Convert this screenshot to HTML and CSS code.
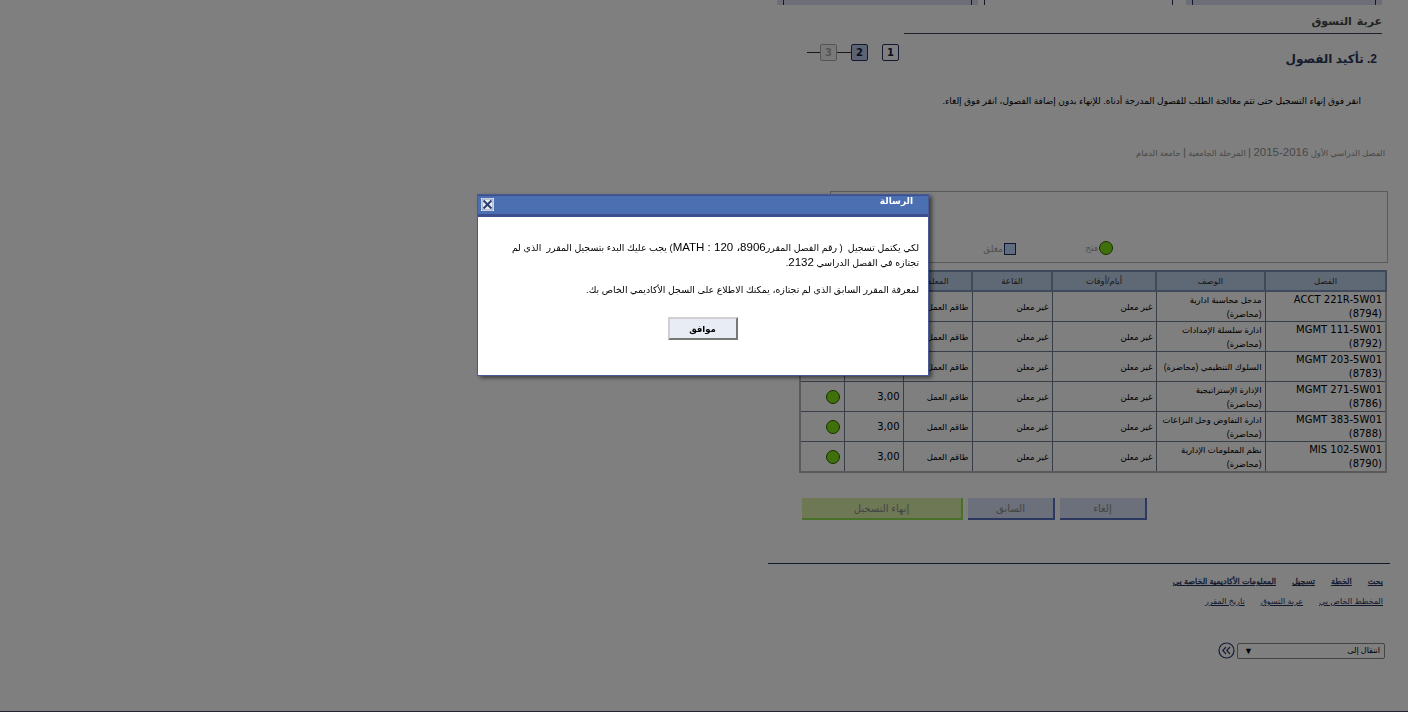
FILE: index.html
```html
<!DOCTYPE html>
<html lang="ar" dir="rtl">
<head>
    <meta charset="utf-8">
    <title>عربة التسوق</title>
    <link rel="stylesheet" href="styles.css">
</head>
<body>
    <div class="page">
        <!-- Tabs -->
        <div class="tabs">
            <div class="tab tab-c"><div class="tab-in"></div></div>
            <div class="tab tab-b"><div class="tab-in"></div></div>
            <div class="tab tab-a"><div class="tab-in"></div></div>
        </div>

        <div class="page-title">عربة التسوق</div>

        <div class="step-head">
            <h1>2. تأكيد الفصول</h1>
            <div class="steps">
                <span class="step">1</span>
                <span class="step-gap"></span>
                <span class="step step-on">2</span>
                <span class="step-line"></span>
                <span class="step step-off">3</span>
                <span class="step-line step-line-end"></span>
            </div>
        </div>

        <p class="intro">انقر فوق إنهاء التسجيل حتى تتم معالجة الطلب للفصول المدرجة أدناه. للإنهاء بدون إضافة الفصول، انقر فوق إلغاء.</p>
        <p class="term">الفصل الدراسي الأول <span class="latin">2016-2015</span> <span class="latin">|</span> المرحلة الجامعية <span class="latin">|</span> جامعة الدمام</p>

        <!-- Legend -->
        <div class="legend">
            <span class="legend-item"><i class="dot"></i>فتح</span>
            <span class="legend-item"><i class="box"></i>مغلق</span>
        </div>

        <!-- Classes -->
        <table class="classes">
            <colgroup>
                <col class="c-class"><col class="c-desc"><col class="c-days"><col class="c-room"><col class="c-staff"><col class="c-units"><col class="c-status">
            </colgroup>
            <thead>
                <tr><th>الفصل</th><th>الوصف</th><th>أيام/أوقات</th><th>القاعة</th><th>المعلم</th><th>الساعات</th><th>الحالة</th></tr>
            </thead>
            <tbody>
                <tr><td class="code">ACCT 221R-5W01<br>(8794)</td><td>مدخل محاسبة ادارية (محاضرة)</td><td>غير معلن</td><td>غير معلن</td><td>طاقم العمل</td><td class="code">3,00</td><td><i class="dot"></i></td></tr>
                <tr><td class="code">MGMT 111-5W01<br>(8792)</td><td>ادارة سلسلة الإمدادات (محاضرة)</td><td>غير معلن</td><td>غير معلن</td><td>طاقم العمل</td><td class="code">3,00</td><td><i class="dot"></i></td></tr>
                <tr><td class="code">MGMT 203-5W01<br>(8783)</td><td>السلوك التنظيمي (محاضرة)</td><td>غير معلن</td><td>غير معلن</td><td>طاقم العمل</td><td class="code">3,00</td><td><i class="dot"></i></td></tr>
                <tr><td class="code">MGMT 271-5W01<br>(8786)</td><td>الإدارة الإستراتيجية (محاضرة)</td><td>غير معلن</td><td>غير معلن</td><td>طاقم العمل</td><td class="code">3,00</td><td><i class="dot"></i></td></tr>
                <tr><td class="code">MGMT 383-5W01<br>(8788)</td><td>ادارة التفاوض وحل النزاعات (محاضرة)</td><td>غير معلن</td><td>غير معلن</td><td>طاقم العمل</td><td class="code">3,00</td><td><i class="dot"></i></td></tr>
                <tr><td class="code">MIS 102-5W01<br>(8790)</td><td>نظم المعلومات الإدارية (محاضرة)</td><td>غير معلن</td><td>غير معلن</td><td>طاقم العمل</td><td class="code">3,00</td><td><i class="dot"></i></td></tr>
            </tbody>
        </table>

        <div class="actions">
            <button class="act">إلغاء</button>
            <button class="act">السابق</button>
            <button class="act act-finish">إنهاء التسجيل</button>
        </div>

        <!-- Footer links -->
        <div class="foot">
            <div class="foot-links foot-main">
                <a href="#">بحث</a>
                <a href="#">الخطة</a>
                <a href="#">تسجيل</a>
                <a href="#">المعلومات الأكاديمية الخاصة بي</a>
            </div>
            <div class="foot-links">
                <a href="#">المخطط الخاص بي</a>
                <a href="#">عربة التسوق</a>
                <a href="#">تاريخ المقرر</a>
            </div>
        </div>

        <div class="jump">
            <div class="jump-select"><span>انتقال إلى</span><span class="jump-arrow">▼</span></div>
            <svg class="jump-go" width="17" height="17" viewBox="0 0 17 17">
                <circle cx="8.5" cy="8.5" r="7.5" fill="none" stroke="#2b3a6b" stroke-width="1.2"/>
                <path d="M8 5 4.8 8.5 8 12M12 5 8.8 8.5 12 12" fill="none" stroke="#2b3a6b" stroke-width="1.2"/>
            </svg>
        </div>
    </div>

    <div class="overlay"></div>

    <!-- Message dialog -->
    <div class="dialog">
        <div class="dialog-title">
            <span>الرسالة</span>
            <svg class="dialog-close" width="13" height="13" viewBox="0 0 13 13">
                <rect width="13" height="13" fill="#fff"/>
                <rect x="1" y="1" width="11" height="11" fill="#e8ebf2" stroke="#4a5f90" stroke-width=".6"/>
                <path d="M2.5 2.5l8 8M10.5 2.5l-8 8" stroke="#2b3f70" stroke-width="2"/>
            </svg>
        </div>
        <div class="dialog-body">
            <p>لكي يكتمل تسجيل&nbsp; ( رقم الفصل المقرر<span class="latin">8906، 120 : MATH</span>) يجب عليك البدء بتسجيل المقرر&nbsp; الذي لم تجتازه في الفصل الدراسي <span class="latin">2132</span>.</p>
            <p>لمعرفة المقرر السابق الذي لم تجتازه، يمكنك الاطلاع على السجل الأكاديمي الخاص بك.</p>
            <button class="ok">موافق</button>
        </div>
    </div>
</body>
</html>
```

FILE: styles.css
```css
html, body {
    margin: 0;
    height: 100%;
    overflow: hidden;
    background: #fff;
}

body {
    font-family: "Liberation Sans", "DejaVu Sans", sans-serif;
    font-size: 10px;
    color: #000;
}

/* Content column sits on the right of the window */
.page {
    box-sizing: border-box;
    width: 622px;
    height: 711px;
    margin-right: 18px;
}

.tabs {
    display: flex;
    height: 5px;
    padding: 0 8px 0 9px;
}

.tab {
    box-sizing: border-box;
    padding: 0 6px;
    background: #dcdcf0;
}

.tab-in {
    height: 100%;
    border: solid #24335f;
    border-width: 0 1px;
}

.tab-a { width: 201px; }
.tab-b { width: 189px; margin: 0 13px 0 6px; background: #fff; padding: 0; }
.tab-c { width: 196px; }

.page-title {
    margin: 9px 8px 0 0;
    width: 478px;
    height: 20px;
    box-sizing: border-box;
    border-bottom: 1px solid #445;
    font-size: 11px;
    line-height: 14px;
    font-weight: bold;
    color: #444;
    word-spacing: 2px;
}

.step-head {
    display: flex;
    justify-content: space-between;
    align-items: flex-start;
    padding: 10px 13px 0 39px;
    height: 50px;
    box-sizing: border-box;
}

.step-head h1 {
    margin: 6px 0 0;
    font-size: 12px;
    line-height: 18px;
    color: #2c3a5e;
}

.steps {
    display: flex;
    align-items: center;
}

.step {
    box-sizing: border-box;
    width: 17px;
    height: 17px;
    border: 1px solid #24335f;
    border-radius: 2px;
    background: #fff;
    color: #101a40;
    font: bold 10px/15px "DejaVu Sans", sans-serif;
    text-align: center;
}

.step-on {
    background: #b8c8e6;
}

.step-off {
    border-color: #aaa;
    background: #f2f2f2;
    color: #aaa;
}

.step-gap {
    width: 14px;
}

.step-line {
    width: 14px;
    height: 1px;
    background: #333;
}

.step-line-end {
    width: 13px;
}

.latin {
    font-size: 11.5px;
    line-height: 1;
}

.intro {
    margin: 10px 29px 0 0;
    font-size: 9px;
    line-height: 14px;
}

.term {
    margin: 38px 5px 0 0;
    font-size: 8.4px;
    line-height: 14px;
    color: #909090;
}

.legend {
    box-sizing: border-box;
    display: flex;
    align-items: flex-end;
    gap: 61px;
    height: 72px;
    margin: 31px 2px 0 62px;
    padding: 0 274px 7px 0;
    border: 1px solid #b5b5b5;
    color: #a0a0a0;
    font-size: 9px;
}

.legend-item {
    display: flex;
    align-items: center;
    gap: 1px;
    width: 36px;
}

.dot {
    display: inline-block;
    box-sizing: border-box;
    width: 14px;
    height: 14px;
    border: 1px solid #2d6000;
    border-radius: 50%;
    background: #7fe016;
}

.box {
    display: inline-block;
    box-sizing: border-box;
    width: 12px;
    height: 12px;
    border: 1px solid #1a2f60;
    background: #c0d8ff;
}

.classes {
    box-sizing: border-box;
    width: 586px;
    margin: 7px 3px 0 0;
    border-collapse: collapse;
    table-layout: fixed;
    border: 2px solid #b4b4b4;
}

.c-class { width: 121px; }
.c-desc { width: 109px; }
.c-days { width: 104px; }
.c-room { width: 80px; }
.c-staff { width: 69px; }
.c-units { width: 59px; }
.c-status { width: 44px; }

.classes th {
    height: 18px;
    padding: 0;
    border: 2px solid #7f92b8;
    background: #bfd0ea;
    color: #333;
    font-size: 8.5px;
    font-weight: normal;
}

.classes td {
    height: 29px;
    padding: 0 3px;
    border: 1px solid #6f7c90;
    background: #fff;
    font-size: 8.5px;
    line-height: 14px;
    text-align: right;
}

.classes td:last-child {
    padding-right: 4px;
}

.classes .dot {
    display: block;
}

.classes .code {
    font: 10px/14px "DejaVu Sans", sans-serif;
}

.actions {
    display: flex;
    gap: 5px;
    margin: 25px 243px 0 0;
}

.act {
    box-sizing: border-box;
    width: 87px;
    height: 22px;
    padding: 0;
    border: solid #5a70c0;
    border-width: 0 2px 2px 0;
    background: #d6e0f4;
    color: #888;
    font: 10px "Liberation Sans", "DejaVu Sans", sans-serif;
}

.act-finish {
    width: 161px;
    border-color: #90e050;
    background: #dcf0aa;
}

.foot {
    margin: 43px 0 0;
    padding: 9px 7px 0 0;
    border-top: 1px solid #24335f;
}

.foot-links {
    display: flex;
    gap: 16px;
    height: 20px;
    line-height: 18px;
    font-size: 8px;
}

.foot-links a {
    color: #24335f;
}

.foot-main a {
    -webkit-text-stroke: .3px #24335f;
}

.jump {
    display: flex;
    align-items: center;
    gap: 2px;
    margin: 29px 5px 0 0;
}

.jump-select {
    box-sizing: border-box;
    display: flex;
    justify-content: space-between;
    width: 148px;
    height: 16px;
    padding: 0 4px 0 6px;
    border: 1px solid #888;
    border-radius: 2px;
    background: #fff;
    font-size: 8px;
    line-height: 14px;
}

.jump-arrow {
    font-size: 9px;
}

.overlay {
    position: fixed;
    inset: 0;
    background: rgba(0, 0, 0, .5);
    border-bottom: 1px solid #223;
}

/* Message dialog over the dimmed page */
.dialog {
    position: fixed;
    left: 477px;
    top: 194px;
    box-sizing: border-box;
    width: 452px;
    height: 182px;
    border: 1px solid #4a5a94;
    background: #fff;
    box-shadow: 3px 2px 4px rgba(0, 0, 0, .5);
}

.dialog-title {
    box-sizing: border-box;
    height: 22px;
    padding: 0 15px 0 0;
    border-top: 1px solid #3a4f90;
    border-bottom: 3px solid #3c4f8c;
    background: #4b6fb0;
    color: #fff;
    font-size: 9px;
    font-weight: bold;
    line-height: 11px;
}

.dialog-close {
    position: absolute;
    left: 3px;
    top: 3px;
}

.dialog-body {
    padding: 23px 9px 0 8px;
    text-align: center;
}

.dialog-body p {
    margin: 0 0 12px;
    font-size: 9.4px;
    line-height: 15px;
    text-align: right;
}

.ok {
    display: block;
    box-sizing: border-box;
    width: 70px;
    height: 23px;
    margin: 20px auto 0;
    padding: 0;
    border: solid #d0d0d0;
    border-width: 2px;
    border-bottom-color: #777;
    border-right-color: #777;
    background: #e8ecf5;
    color: #000;
    font: bold 8.5px "Liberation Sans", "DejaVu Sans", sans-serif;
}
```
